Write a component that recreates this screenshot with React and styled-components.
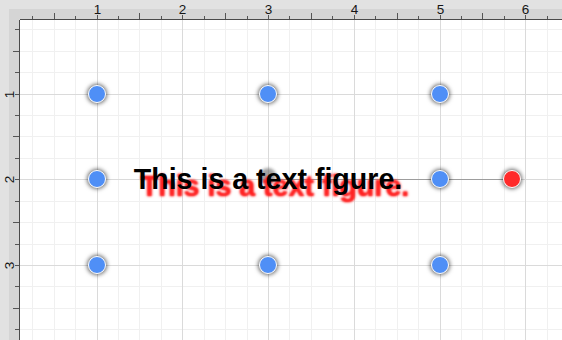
import React from 'react';
import styled, { createGlobalStyle } from 'styled-components';

const U = 85.75;
const MINOR = U / 4;
const OX = 76.5; // canvas-local x of unit 1
const OY = 73.5; // canvas-local y of unit 1
const CW = 542;
const CH = 320;

const Global = createGlobalStyle`
  html, body { margin: 0; padding: 0; background: #fff; overflow: hidden; }
  body { font-family: "Liberation Sans", Arial, Helvetica, sans-serif; }
`;

const Frame = styled.div`
  display: grid;
  grid-template-columns: 20px 1fr;
  grid-template-rows: 20px 1fr;
  width: 562px;
  height: 340px;
  overflow: hidden;
`;

const Corner = styled.div`
  background: linear-gradient(#d5d5d5, #d5d5d5) no-repeat right bottom / 11px 11px, #e2e2e2;
`;

const HRuler = styled.div`
  background: linear-gradient(to bottom, #e2e2e2 9px, #d5d5d5 9px);
  overflow: hidden;
  svg { display: block; }
`;

const VRuler = styled.div`
  background: linear-gradient(to right, #e2e2e2 9px, #d5d5d5 9px);
  overflow: hidden;
  svg { display: block; }
`;

const Canvas = styled.div`
  position: relative;
  background: #fff;
  overflow: hidden;
`;

const GridLayer = styled.svg`
  position: absolute;
  inset: 0;
  display: block;
`;

const Handle = styled.div`
  position: absolute;
  left: ${(p) => p.$x}px;
  top: ${(p) => p.$y}px;
  width: 18px;
  height: 18px;
  box-sizing: border-box;
  border-radius: 50%;
  border: 1.5px solid #fff;
  background: ${(p) => p.$color};
  box-shadow: 0 0 4px 1px rgba(0, 0, 0, 0.6);
  transform: translate(-50%, -50%);
`;

const CenterDot = styled.div`
  position: absolute;
  left: ${(p) => p.$x}px;
  top: ${(p) => p.$y}px;
  width: 16px;
  height: 16px;
  border-radius: 50%;
  background: rgba(100, 100, 100, 0.6);
  filter: blur(1.5px);
  transform: translate(-50%, -50%);
`;

const Connector = styled.div`
  position: absolute;
  left: ${(p) => p.$x1}px;
  width: ${(p) => p.$x2 - p.$x1}px;
  top: ${(p) => p.$y}px;
  height: 1px;
  background: #9d9d9d;
`;

const TextFigure = styled.div`
  position: absolute;
  left: ${(p) => p.$x}px;
  top: ${(p) => p.$y}px;
  transform: translate(-50%, -50%);
  white-space: nowrap;
  font-family: "Liberation Sans", Arial, Helvetica, sans-serif;
  font-weight: 700;
  font-size: 28.6px;
  line-height: 1;
  color: #000;
  text-shadow: 7px 7px 2px rgba(255, 30, 30, 0.95), 7px 7px 3px rgba(255, 40, 40, 0.8);
`;

function tickList(origin, length) {
  const out = [];
  let start = origin;
  let idx = 0;
  while (start - MINOR > -2) {
    start -= MINOR;
    idx -= 1;
  }
  for (let p = start, i = idx; p < length + 2; p += MINOR, i += 1) {
    out.push({ pos: Math.round(p) + 0.5, kind: ((i % 4) + 4) % 4, unit: Math.floor(i / 4) + 1 });
  }
  return out;
}

function TopRuler() {
  const ticks = tickList(OX, CW);
  return (
    <HRuler>
      <svg width={CW} height={20}>
        {ticks.map((t, i) => {
          const y1 = t.kind === 2 ? 13 : t.kind === 0 ? 15 : 16;
          return <line key={i} x1={t.pos} x2={t.pos} y1={y1} y2={19} stroke="#555" strokeWidth="1" />;
        })}
        {ticks
          .filter((t) => t.kind === 0 && t.unit >= 1)
          .map((t) => (
            <text key={t.unit} x={t.pos} y={13.5} textAnchor="middle" fontSize="13.5" fill="#151515"
              fontFamily='"Liberation Sans", Arial, sans-serif'>
              {t.unit}
            </text>
          ))}
        <line x1={0} x2={CW} y1={19.5} y2={19.5} stroke="#4a4a4a" strokeWidth="1" />
      </svg>
    </HRuler>
  );
}

function LeftRuler() {
  const ticks = tickList(OY, CH);
  return (
    <VRuler>
      <svg width={20} height={CH}>
        {ticks.map((t, i) => {
          const x1 = t.kind === 2 ? 13 : 15;
          return <line key={i} y1={t.pos} y2={t.pos} x1={x1} x2={19} stroke="#555" strokeWidth="1" />;
        })}
        {ticks
          .filter((t) => t.kind === 0 && t.unit >= 1)
          .map((t) => (
            <text key={t.unit} x={0} y={0} transform={`translate(13.5 ${t.pos}) rotate(-90)`}
              textAnchor="middle" fontSize="13.5" fill="#151515"
              fontFamily='"Liberation Sans", Arial, sans-serif'>
              {t.unit}
            </text>
          ))}
        <line y1={0} y2={CH} x1={19.5} x2={19.5} stroke="#4a4a4a" strokeWidth="1" />
      </svg>
    </VRuler>
  );
}

function Grid() {
  const xs = tickList(OX, CW);
  const ys = tickList(OY, CH);
  return (
    <GridLayer width={CW} height={CH}>
      {xs.filter((t) => t.kind !== 0).map((t, i) => (
        <line key={'xm' + i} x1={t.pos} x2={t.pos} y1={0} y2={CH} stroke="#f0f0f0" />
      ))}
      {ys.filter((t) => t.kind !== 0).map((t, i) => (
        <line key={'ym' + i} y1={t.pos} y2={t.pos} x1={0} x2={CW} stroke="#f0f0f0" />
      ))}
      {xs.filter((t) => t.kind === 0).map((t, i) => (
        <line key={'xM' + i} x1={t.pos} x2={t.pos} y1={0} y2={CH} stroke="#dadada" />
      ))}
      {ys.filter((t) => t.kind === 0).map((t, i) => (
        <line key={'yM' + i} y1={t.pos} y2={t.pos} x1={0} x2={CW} stroke="#dadada" />
      ))}
    </GridLayer>
  );
}

const cols = [OX, OX + 2 * U, OX + 4 * U];
const rows = [OY, OY + U, OY + 2 * U];
const handles = [];
rows.forEach((y) => cols.forEach((x) => handles.push({ x, y })));

export default function App() {
  const cx = OX + 2 * U;
  const cy = OY + U;
  const redX = 491.5;
  return (
    <>
      <Global />
      <Frame>
        <Corner />
        <TopRuler />
        <LeftRuler />
        <Canvas>
          <Grid />
          <Connector $x1={cx} $x2={redX} $y={159} />
          <CenterDot $x={cx} $y={cy - 3} />
          {handles
            .filter((h) => !(h.x === cx && h.y === cy))
            .map((h, i) => (
              <Handle key={i} $x={h.x} $y={h.y} $color="#4f8ff6" />
            ))}
          <Handle $x={redX} $y={cy} $color="#ff2b2b" />
          <TextFigure $x={cx} $y={cy}>This is a text figure.</TextFigure>
        </Canvas>
      </Frame>
    </>
  );
}
